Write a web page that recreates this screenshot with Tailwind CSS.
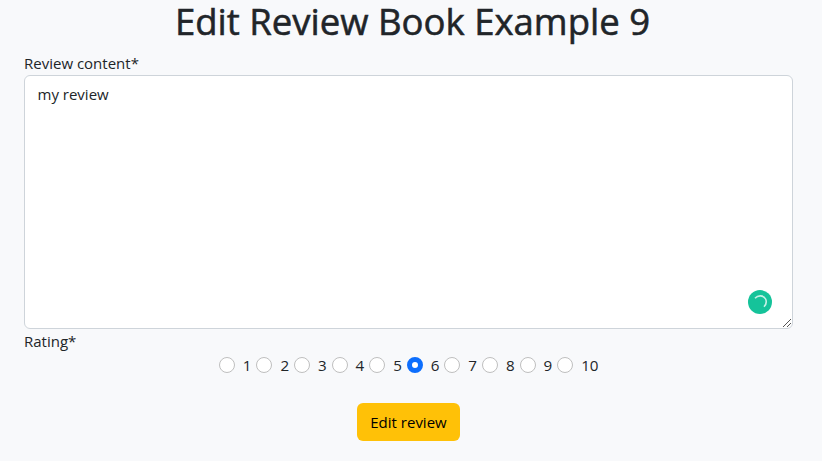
<!DOCTYPE html>
<html lang="en">
<head>
<meta charset="utf-8">
<title>Edit Review</title>
<script src="https://cdn.jsdelivr.net/npm/@tailwindcss/browser@4"></script>
</head>
<body class="h-[461px] bg-[#f8f9fb] font-['Open_Sans','Noto_Sans',sans-serif] text-[15px] leading-6 text-[#212529]">
<main class="pl-6 pr-[29px]">
  <h1 class="flex h-[52px] items-start justify-center pl-2 text-[36.5px] font-medium leading-[42px] whitespace-nowrap [-webkit-text-stroke:0.55px_#212529]">Edit Review Book Example 9</h1>
  <form onsubmit="return false">
    <label for="content" class="block h-[23px] leading-[23px]">Review content*</label>
    <div class="relative h-[254px]">
      <textarea id="content" spellcheck="false" class="block h-full w-full resize-none rounded-md border border-[#ced4da] bg-white px-[12.5px] py-[6px] text-[15px] leading-6 outline-none">my review</textarea>
      <svg class="absolute right-[21px] bottom-[15px] size-6" viewBox="0 0 24 24" fill="none"><circle cx="12" cy="12" r="12" fill="#15c39a"/><path d="M7 8.2C10 5 15.5 5 17.6 9C18.7 11.5 18.2 14.5 16 16.8" stroke="#c5f0e5" stroke-width="1.6"/></svg>
      <svg class="absolute right-[1px] bottom-[1px] size-[10px]" viewBox="0 0 10 10" fill="none" stroke="#555"><path d="M1 9L9 1M5 9L9 5" stroke-width="1"/></svg>
    </div>
    <div class="h-6 leading-6">Rating*</div>
    <div id="ratings" class="ml-[194.8px] flex h-6 text-[15.2px]"></div>
    <div class="mt-[26px] flex justify-center">
      <button class="h-[38px] w-[103px] rounded-md bg-[#ffc107] text-[15px] whitespace-nowrap text-black">Edit review</button>
    </div>
  </form>
</main>
<script>
const row = document.getElementById('ratings');
for (let i = 1; i <= 10; i++) {
  const label = document.createElement('label');
  label.className = 'flex w-[37.6px] shrink-0 items-center gap-2';
  label.innerHTML = `<input type="radio" name="rating" value="${i}" ${i === 6 ? 'checked' : ''} class="size-4 shrink-0 appearance-none rounded-full border border-[#bfbfbf] bg-white checked:border-[5px] checked:border-[#0d6efd]"><span>${i}</span>`;
  row.append(label);
}
</script>
</body>
</html>
